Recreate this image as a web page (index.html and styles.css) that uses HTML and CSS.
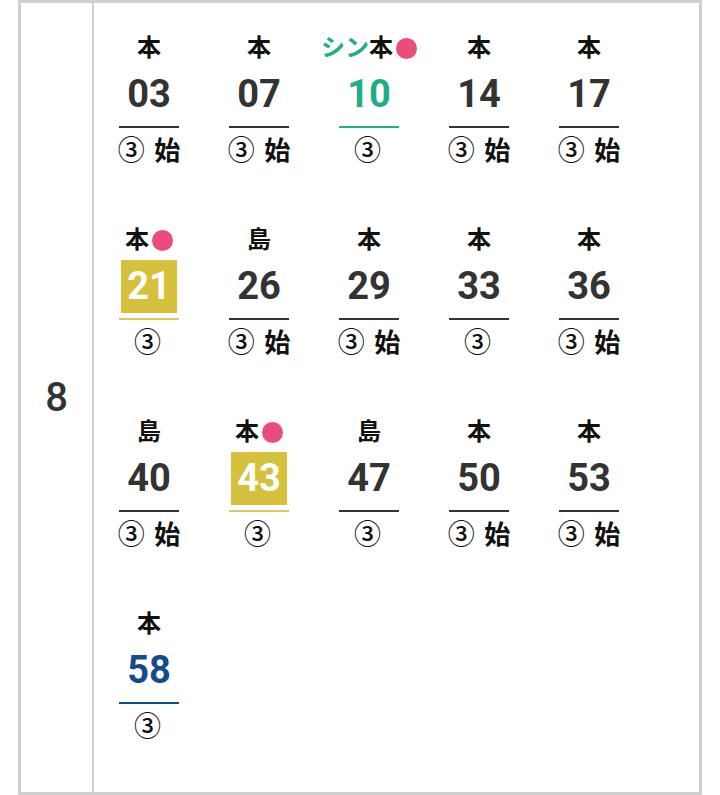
FILE: index.html
```html
<!DOCTYPE html>
<html lang="ja">
<head>
<meta charset="utf-8">
<link rel="stylesheet" href="styles.css">
</head>
<body>
<div class="table">
  <div class="hour">8</div>
  <div class="cells">
    <div class="cell"><div class="label">本</div><div class="num"><span>03</span></div><div class="rule"></div><div class="sub"><span class="c">③</span> 始</div></div>
    <div class="cell"><div class="label">本</div><div class="num"><span>07</span></div><div class="rule"></div><div class="sub"><span class="c">③</span> 始</div></div>
    <div class="cell teal"><div class="label"><span class="tealtext">シン</span>本<i class="dot"></i></div><div class="num"><span>10</span></div><div class="rule"></div><div class="sub"><span class="c">③</span></div></div>
    <div class="cell"><div class="label">本</div><div class="num"><span>14</span></div><div class="rule"></div><div class="sub"><span class="c">③</span> 始</div></div>
    <div class="cell"><div class="label">本</div><div class="num"><span>17</span></div><div class="rule"></div><div class="sub"><span class="c">③</span> 始</div></div>

    <div class="cell yellow"><div class="label">本<i class="dot"></i></div><div class="num"><span>21</span></div><div class="rule"></div><div class="sub"><span class="c">③</span></div></div>
    <div class="cell"><div class="label">島</div><div class="num"><span>26</span></div><div class="rule"></div><div class="sub"><span class="c">③</span> 始</div></div>
    <div class="cell"><div class="label">本</div><div class="num"><span>29</span></div><div class="rule"></div><div class="sub"><span class="c">③</span> 始</div></div>
    <div class="cell"><div class="label">本</div><div class="num"><span>33</span></div><div class="rule"></div><div class="sub"><span class="c">③</span></div></div>
    <div class="cell"><div class="label">本</div><div class="num"><span>36</span></div><div class="rule"></div><div class="sub"><span class="c">③</span> 始</div></div>

    <div class="cell"><div class="label">島</div><div class="num"><span>40</span></div><div class="rule"></div><div class="sub"><span class="c">③</span> 始</div></div>
    <div class="cell yellow"><div class="label">本<i class="dot"></i></div><div class="num"><span>43</span></div><div class="rule"></div><div class="sub"><span class="c">③</span></div></div>
    <div class="cell"><div class="label">島</div><div class="num"><span>47</span></div><div class="rule"></div><div class="sub"><span class="c">③</span></div></div>
    <div class="cell"><div class="label">本</div><div class="num"><span>50</span></div><div class="rule"></div><div class="sub"><span class="c">③</span> 始</div></div>
    <div class="cell"><div class="label">本</div><div class="num"><span>53</span></div><div class="rule"></div><div class="sub"><span class="c">③</span> 始</div></div>

    <div class="cell blue"><div class="label">本</div><div class="num"><span>58</span></div><div class="rule"></div><div class="sub"><span class="c">③</span></div></div>
  </div>
</div>
</body>
</html>
```
FILE: styles.css
```css
html, body {
  margin: 0;
  padding: 0;
  background: #fff;
}
body {
  font-family: "Roboto", "Noto Sans CJK JP", sans-serif;
  color: #333;
}
.table {
  box-sizing: border-box;
  margin-left: 18px;
  width: 684px;
  height: 795px;
  border: 3px solid #cfcfcf;
  display: flex;
}
.hour {
  width: 71px;
  flex: none;
  border-right: 2px solid #cfcfcf;
  display: flex;
  align-items: center;
  justify-content: center;
  font-size: 40px;
  font-weight: 500;
  color: #333;
}
.cells {
  flex: 1;
  display: flex;
  flex-wrap: wrap;
  align-content: flex-start;
}
.cell {
  box-sizing: border-box;
  width: 110px;
  height: 192px;
  padding-top: 30px;
  display: flex;
  flex-direction: column;
  align-items: center;
}
.label {
  height: 30px;
  line-height: 30px;
  font-size: 24px;
  font-weight: 700;
  color: #111;
  display: flex;
  align-items: center;
  white-space: nowrap;
}
.tealtext {
  color: #1fae89;
}
.dot {
  display: inline-block;
  width: 21px;
  height: 21px;
  border-radius: 50%;
  background: #ea4d7b;
  margin-left: 3px;
}
.num {
  margin-top: 5px;
  height: 53px;
  display: flex;
  justify-content: center;
}
.num span {
  display: block;
  font-size: 38px;
  font-weight: 700;
  line-height: 53px;
  padding: 0 6px;
  color: #333;
}
.rule {
  margin-top: 5px;
  width: 60px;
  height: 2px;
  background: #333;
}
.sub {
  margin-top: 8px;
  height: 30px;
  line-height: 30px;
  font-size: 26px;
  font-weight: 700;
  color: #111;
  white-space: nowrap;
}
.sub .c {
  font-weight: 500;
  font-size: 27px;
  margin-right: 3px;
}
.teal .num span { color: #1fae89; }
.teal .rule { background: #1fae89; }
.blue .num span { color: #134b8c; }
.blue .rule { background: #134b8c; }
.yellow .num span {
  background: #d5c13c;
  color: #fff;
}
.yellow .rule {
  background: #d8c869;
}
```
